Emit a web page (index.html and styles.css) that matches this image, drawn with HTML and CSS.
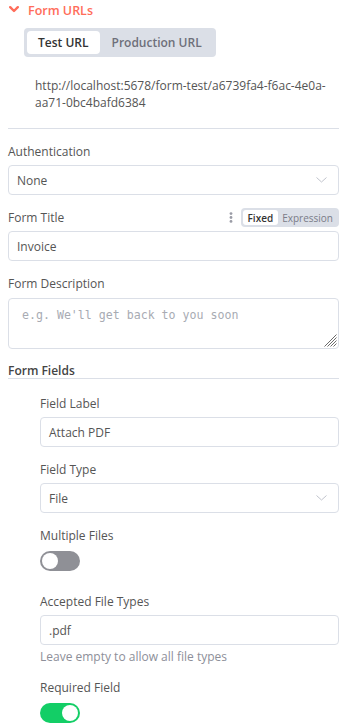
FILE: index.html
```html
<!DOCTYPE html>
<html>
<head>
<meta charset="utf-8">
<link rel="stylesheet" href="styles.css">
</head>
<body>
<div class="panel">
  <div class="section-head">
    <svg class="chev" width="10" height="7" viewBox="0 0 10 7"><path d="M1.2 1.2 L5 5 L8.8 1.2" fill="none" stroke="#ff6d5a" stroke-width="2.4" stroke-linecap="round" stroke-linejoin="round"/></svg>
    <span>Form URLs</span>
  </div>
  <div class="seg-wrap">
    <div class="seg">
      <div class="seg-btn active">Test URL</div>
      <div class="seg-btn">Production URL</div>
    </div>
  </div>
  <div class="url">http://localhost:5678/form-test/a6739fa4-f6ac-4e0a-aa71-0bc4bafd6384</div>
  <div class="divider"></div>

  <div class="field f-auth">
    <div class="label">Authentication</div>
    <div class="input select"><span>None</span>
      <svg width="11" height="6" viewBox="0 0 11 6"><path d="M0.5 0.5 L5.5 5 L10.5 0.5" fill="none" stroke="#c0c4cc" stroke-width="1"/></svg>
    </div>
  </div>

  <div class="field f-title">
    <div class="label-row">
      <div class="label">Form Title</div>
      <div class="label-tools">
        <svg class="dots" width="4" height="11" viewBox="0 0 4 11"><circle cx="2" cy="1.6" r="1.4" fill="#9a9ca6"/><circle cx="2" cy="5.5" r="1.4" fill="#9a9ca6"/><circle cx="2" cy="9.4" r="1.4" fill="#9a9ca6"/></svg>
        <div class="mini-seg">
          <div class="mini-btn active">Fixed</div>
          <div class="mini-btn">Expression</div>
        </div>
      </div>
    </div>
    <div class="input"><span>Invoice</span></div>
  </div>

  <div class="field f-desc">
    <div class="label">Form Description</div>
    <div class="textarea"><span class="ph">e.g. We'll get back to you soon</span>
      <svg class="grip" width="13" height="13" viewBox="0 0 13 13"><path d="M12.5 0.5 L0.5 12.5 M12.5 3.5 L3.5 12.5 M12.5 6.5 L6.5 12.5 M12.5 9.5 L9.5 12.5" fill="none" stroke="#6b6b6b" stroke-width="1"/></svg>
    </div>
  </div>

  <div class="group-title">Form Fields</div>

  <div class="nested">
    <div class="field n1">
      <div class="label">Field Label</div>
      <div class="input"><span>Attach PDF</span></div>
    </div>
    <div class="field n2">
      <div class="label">Field Type</div>
      <div class="input select"><span>File</span>
        <svg width="11" height="6" viewBox="0 0 11 6"><path d="M0.5 0.5 L5.5 5 L10.5 0.5" fill="none" stroke="#c0c4cc" stroke-width="1"/></svg>
      </div>
    </div>
    <div class="field n3">
      <div class="label">Multiple Files</div>
      <div class="switch off"><div class="knob"></div></div>
    </div>
    <div class="field n4">
      <div class="label">Accepted File Types</div>
      <div class="input"><span>.pdf</span></div>
      <div class="hint">Leave empty to allow all file types</div>
    </div>
    <div class="field n5">
      <div class="label">Required Field</div>
      <div class="switch on"><div class="knob"></div></div>
    </div>
  </div>
</div>
</body>
</html>
```
FILE: styles.css
```css
* { box-sizing: border-box; }
html, body { margin: 0; padding: 0; background: #fff; }
body {
  font-family: "Open Sans", "Noto Sans", sans-serif;
  color: #555;
  width: 355px;
  overflow: hidden;
}
.panel { padding: 0 16px 0 8px; }

.section-head {
  display: flex;
  align-items: center;
  height: 21px;
  color: #ff6d5a;
  font-size: 12.5px;
  font-weight: 600;
  padding-left: 1px;
}
.section-head .chev { margin-right: 9px; margin-top: -2px; }

.seg-wrap { padding: 7px 0 0 16px; }
.seg {
  display: inline-flex;
  background: #dbdfe7;
  border-radius: 4px;
  padding: 3px;
  height: 29px;
}
.seg-btn {
  display: flex;
  align-items: center;
  padding: 0 11px 0 12px;
  font-size: 12px;
  font-weight: 600;
  color: #6e6f7a;
  border-radius: 4px;
}
.seg-btn.active { background: #fff; color: #333; padding: 0 11px; }

.url {
  padding: 20px 0 0 27px;
  font-size: 12px;
  line-height: 17px;
  color: #555;
}
.divider { height: 1px; background: #dbdfe7; margin-top: 17px; }

.label {
  font-size: 12px;
  line-height: 16px;
  color: #555;
}
.field .label { margin-bottom: 5px; }

.input {
  height: 30px;
  border: 1px solid #dbdfe7;
  border-radius: 4px;
  display: flex;
  align-items: center;
  justify-content: space-between;
  padding: 0 11px 0 8px;
  font-size: 12px;
  color: #555;
}
.f-auth { margin-top: 15px; }
.f-title { margin-top: 13px; }
.f-desc { margin-top: 15px; }
.f-desc .label { margin-bottom: 6px; }

.label-row {
  display: flex;
  justify-content: space-between;
  align-items: center;
  height: 19px;
  margin-bottom: 4px;
}
.label-row .label { margin: 0; }
.label-tools { display: flex; align-items: center; gap: 8px; }
.mini-seg {
  display: flex;
  background: #dbdfe7;
  border-radius: 4px;
  padding: 2px;
  height: 19px;
}
.mini-btn {
  display: flex;
  align-items: center;
  font-size: 10px;
  padding: 0 4px;
  color: #7a7c88;
  border-radius: 3px;
}
.mini-btn.active { background: #fff; color: #333; font-weight: 600; padding: 0 5px; }

.textarea {
  position: relative;
  height: 51px;
  border: 1px solid #dbdfe7;
  border-radius: 4px;
  padding: 7px 13px;
  font-family: "DejaVu Sans Mono", "Liberation Mono", monospace;
  font-size: 11.6px;
  line-height: 18px;
}
.ph { color: #a8abb3; }
.grip { position: absolute; right: 1px; bottom: 1px; }

.group-title {
  margin-top: 14px;
  font-size: 12px;
  font-weight: 600;
  color: #444;
  line-height: 15px;
  border-bottom: 1px solid #dbdfe7;
}

.nested { padding-left: 32px; }
.n1 { margin-top: 17px; }
.n2, .n3 { margin-top: 15px; }
.n3 .label { margin-bottom: 7px; }
.n4 { margin-top: 23px; }
.n5 { margin-top: 15px; }
.n5 .label { margin-bottom: 7px; }
.hint { font-size: 12px; color: #8d8f99; margin-top: 4px; line-height: 16px; }

.switch {
  width: 40px;
  height: 20px;
  border-radius: 10px;
  position: relative;
}
.switch.off { background: #8f9096; }
.switch.on { background: #13ce66; }
.knob {
  position: absolute;
  top: 2px;
  width: 16px;
  height: 16px;
  border-radius: 50%;
  background: #fff;
}
.switch.off .knob { left: 2px; }
.switch.on .knob { left: 22px; }
```
